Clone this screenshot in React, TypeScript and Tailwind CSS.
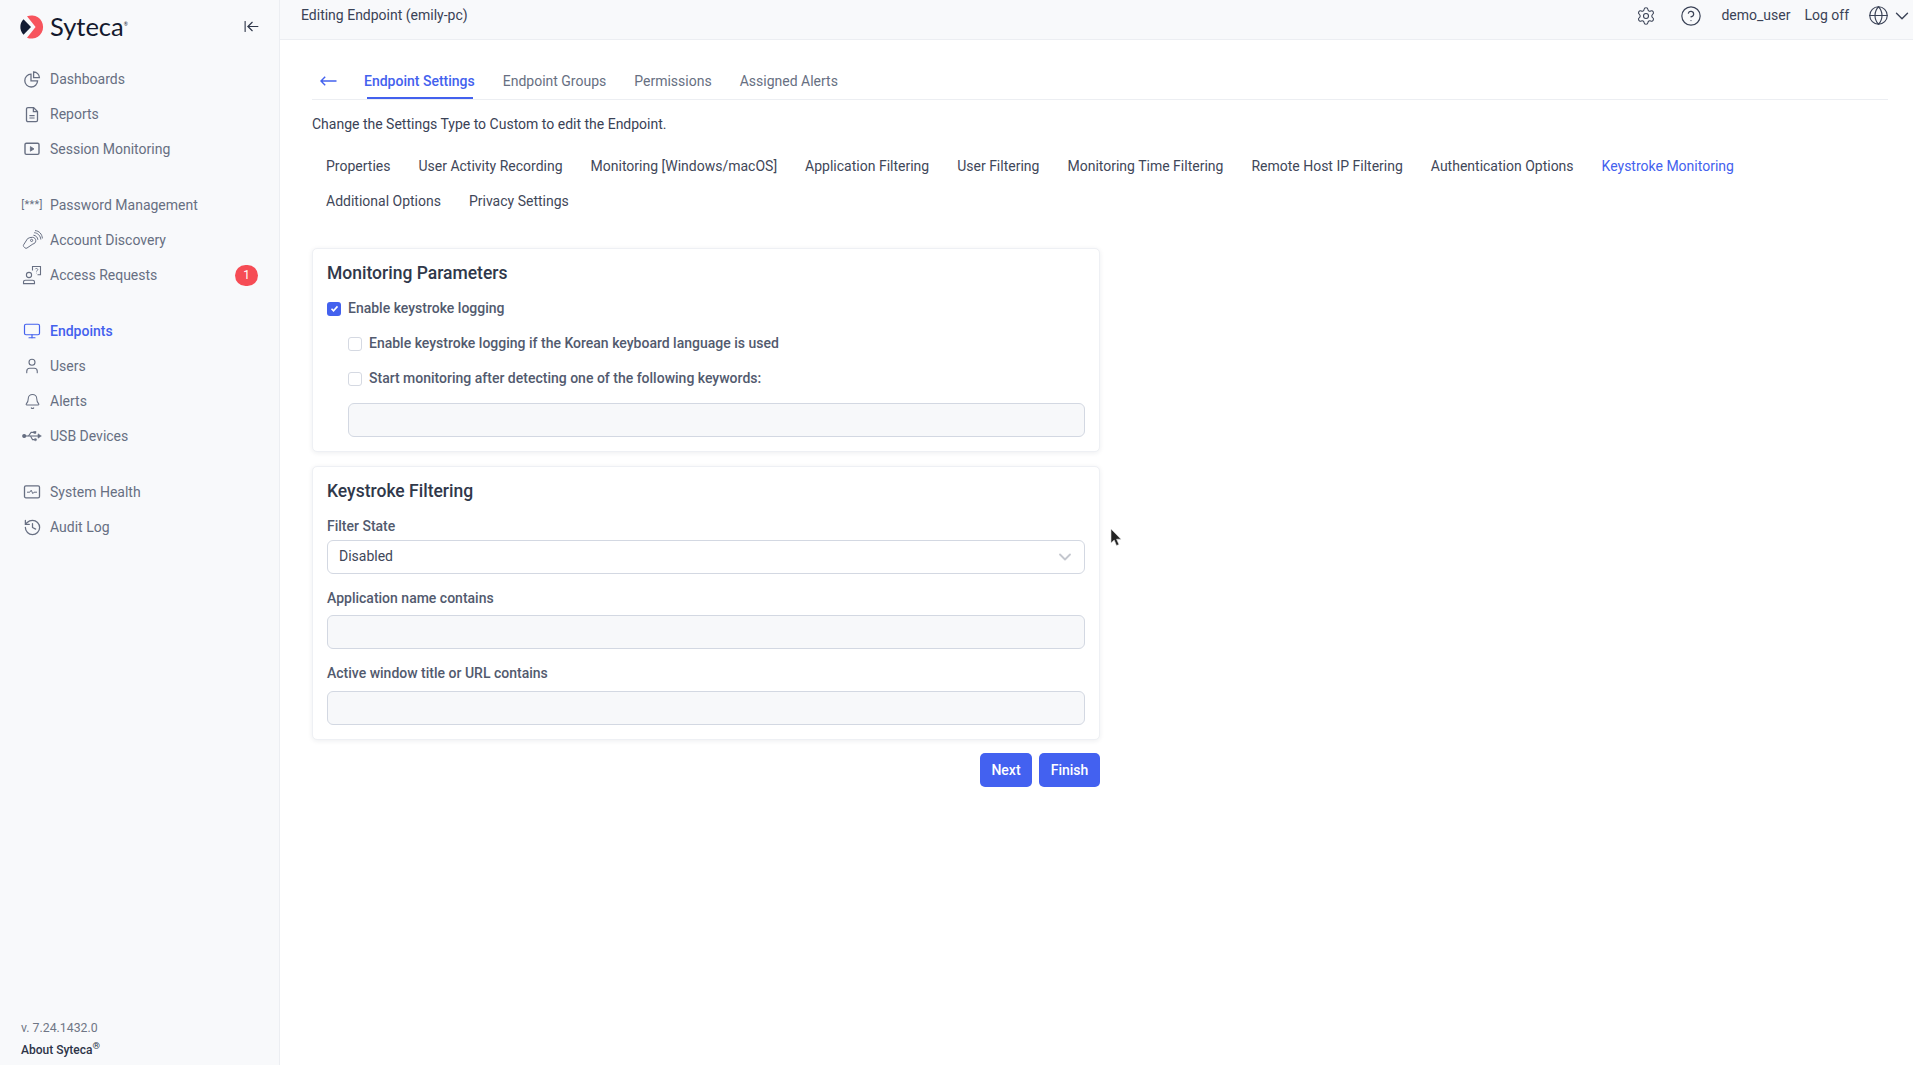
import { ReactNode } from "react";
import { ArrowLeftToLine, Bell, ChevronDown, CircleHelp, Globe, History, Monitor, Settings, User } from "lucide-react";

const PieIcon = () => (
  <svg width="17" height="17" viewBox="0 0 17 17" fill="none" stroke="currentColor" strokeWidth="1.3">
    <path d="M7 3.2a6.4 6.4 0 1 0 6.6 6.6H7z" />
    <path d="M9.6 1v5.6h5.8A5.7 5.7 0 0 0 9.6 1z" />
  </svg>
);

const FileIcon = () => (
  <svg width="16" height="17" viewBox="0 0 16 17" fill="none" stroke="currentColor" strokeWidth="1.3">
    <path d="M2.5 3a1.4 1.4 0 0 1 1.4-1.4H9.6l3.9 3.9v8.8a1.4 1.4 0 0 1-1.4 1.4H3.9a1.4 1.4 0 0 1-1.4-1.4z" />
    <path d="M9.4 1.8v3.9h4" />
    <path d="M5.4 9.6h5.2M5.4 12h5.2" strokeWidth="1.1" />
  </svg>
);

const SessionIcon = () => (
  <svg width="18" height="18" viewBox="0 0 18 18" fill="none" stroke="currentColor" strokeWidth="1.4">
    <rect x="2" y="3.2" width="14" height="11.2" rx="1.4" />
    <path d="M7.4 6.6v4.6l3.6-2.3z" fill="currentColor" strokeWidth="0.8" />
  </svg>
);

const KeyIcon = () => (
  <svg width="21" height="21" viewBox="0 0 21 21" fill="none" stroke="currentColor" strokeWidth="1">
    <path d="M5.6 8.6L1.6 14.8c-.4.7-.3 1.4.3 2l1 1c.6.6 1.4.7 2 .3l6-4.1c1.6-.2 2.9-1.6 2.9-3.3 0-1.9-1.5-3.4-3.4-3.4-1.7 0-3.4.4-4.8 1.3z" />
    <circle cx="9.6" cy="10.4" r="1.1" />
    <path d="M11.4 5.2c2.4.2 4.3 2.1 4.5 4.6M12.2 2.7c3.5.2 6.3 3 6.6 6.8M13 .6c4.3.2 7 3.6 7.4 7.8" />
  </svg>
);

const RequestIcon = () => (
  <svg width="20" height="20" viewBox="0 0 20 20" fill="none" stroke="currentColor" strokeWidth="1.1">
    <circle cx="7" cy="10" r="2.6" />
    <path d="M1.5 18.6v-1.4c0-1.2 1-1.9 2-1.9h7c1 0 2 .7 2 1.9v1.4z" />
    <path d="M10.5 5.5v-4h8v8.3h-3" />
    <path d="M13.2 4.2c.2-1 2.6-1 2.6.4 0 1-1.3 1-1.3 2M14.5 7.8v.5" strokeWidth="0.9" />
  </svg>
);

const UsbIcon = () => (
  <svg width="20" height="14" viewBox="0 0 20 14" fill="none" stroke="currentColor" strokeWidth="1.1">
    <circle cx="2.2" cy="7" r="1.5" fill="currentColor" />
    <path d="M2 7h14" />
    <path d="M16 4.8L19.4 7 16 9.2z" fill="currentColor" strokeWidth="0.5" />
    <path d="M6.5 7l2.6-3.6h3" />
    <rect x="11.8" y="2.3" width="2.2" height="2.2" fill="currentColor" strokeWidth="0.4" />
    <path d="M8.5 7l2 3.6h2" />
    <circle cx="13.4" cy="10.6" r="1.2" fill="currentColor" strokeWidth="0.4" />
  </svg>
);

const HealthIcon = () => (
  <svg width="18" height="18" viewBox="0 0 18 18" fill="none" stroke="currentColor" strokeWidth="1.3">
    <rect x="1.5" y="2.8" width="15" height="12" rx="1.4" />
    <path d="M4 9.2h2.8l1.4-2 1.6 3.4 1.2-1.4H14" strokeWidth="1" />
  </svg>
);

const Logo = () => (
  <svg width="24" height="24" viewBox="0 0 24 24">
    <path d="M3.5 4.3L11 12l-7.5 7.7A11 11 0 0 1 3.5 4.3z" fill="#131c33" />
    <path d="M7 1.3A11.6 11.6 0 1 1 7 22.7L15.6 12z" fill="#f7545d" />
  </svg>
);

const BackArrow = () => (
  <svg width="17" height="10" viewBox="0 0 17 10" fill="none" stroke="#4361ee" strokeWidth="1.4" className="ml-[8px]">
    <path d="M1 5h15.5M5.2 .8L1 5l4.2 4.2" />
  </svg>
);

const NavItem = ({ icon, label, active, badge }: { icon: ReactNode; label: string; active?: boolean; badge?: string }) => (
  <div className={`flex h-[35px] items-center pr-[21px] text-[14px] ${active ? "font-medium text-[#4361ee]" : "text-[#676f82]"}`}>
    <span className="flex w-[50px] shrink-0 justify-center pl-[15px] pr-[1px]">{icon}</span>
    <span className="flex-1">{label}</span>
    {badge && <span className="flex h-[21px] w-[23px] items-center justify-center rounded-full bg-[#f64c55] text-[12px] text-white">{badge}</span>}
  </div>
);

const Sidebar = () => (
  <aside className="flex h-full w-[280px] shrink-0 flex-col border-r border-[#eceef2] bg-[#f8f9fb]">
    <div className="flex items-center pl-[20px] pr-[19px] pt-[11px]">
      <Logo />
      <span className="ml-[6px] flex-1 pb-[5px] font-['Lato'] text-[25.5px] leading-[26px] text-[#141a2e]">Syteca<span className="align-super text-[5px]">®</span></span>
      <ArrowLeftToLine size={17} strokeWidth={1.6} className="mb-[2px] text-[#30384a]" />
    </div>
    <nav className="mt-[18px] flex flex-col">
      <NavItem icon={<PieIcon />} label="Dashboards" />
      <NavItem icon={<FileIcon />} label="Reports" />
      <NavItem icon={<SessionIcon />} label="Session Monitoring" />
      <div className="h-[21px]" />
      <NavItem icon={<span className="whitespace-nowrap text-[11px] tracking-[0.3px]">[***]</span>} label="Password Management" />
      <NavItem icon={<KeyIcon />} label="Account Discovery" />
      <NavItem icon={<RequestIcon />} label="Access Requests" badge="1" />
      <div className="h-[21px]" />
      <NavItem active icon={<Monitor size={18} strokeWidth={1.6} />} label="Endpoints" />
      <NavItem icon={<User size={18} strokeWidth={1.5} />} label="Users" />
      <NavItem icon={<Bell size={17} strokeWidth={1.5} />} label="Alerts" />
      <NavItem icon={<UsbIcon />} label="USB Devices" />
      <div className="h-[21px]" />
      <NavItem icon={<HealthIcon />} label="System Health" />
      <NavItem icon={<History size={19} strokeWidth={1.6} />} label="Audit Log" />
    </nav>
    <div className="mt-auto pb-[4px] pl-[21px]">
      <div className="text-[12.3px] leading-[22px] text-[#6f7685]">v. 7.24.1432.0</div>
      <div className="text-[12px] font-medium leading-[22px] text-[#2d3448]">About Syteca<sup className="text-[9.5px] leading-[0]">®</sup></div>
    </div>
  </aside>
);

const Header = () => (
  <header className="flex h-[40px] items-center justify-between border-b border-[#eceef2] bg-[#f8f9fb] pb-[8px] pl-[21px] text-[14px] text-[#3a4256]">
    <span>Editing Endpoint (emily-pc)</span>
    <div className="flex items-center">
      <Settings size={20} strokeWidth={1.3} />
      <CircleHelp size={22} strokeWidth={1.3} className="ml-[24px]" />
      <span className="ml-[19px]">demo_user</span>
      <span className="ml-[14px]">Log off</span>
      <Globe size={21} strokeWidth={1.3} className="ml-[19px]" />
      <ChevronDown size={22} strokeWidth={1.5} className="ml-[2px]" />
    </div>
  </header>
);

const topTabs = ["Endpoint Groups", "Permissions", "Assigned Alerts"];
const subTabs = ["Properties", "User Activity Recording", "Monitoring [Windows/macOS]", "Application Filtering", "User Filtering", "Monitoring Time Filtering", "Remote Host IP Filtering", "Authentication Options", "Keystroke Monitoring", "Additional Options", "Privacy Settings"];

const Check = ({ checked }: { checked?: boolean }) =>
  checked ? (
    <span className="flex size-[14px] shrink-0 items-center justify-center rounded-[3px] bg-[#4361ee]">
      <svg width="9" height="9" viewBox="0 0 9 9" fill="none" stroke="white" strokeWidth="1.6"><path d="M1.5 4.8l2 2 4-4.4" /></svg>
    </span>
  ) : (
    <span className="size-[14px] shrink-0 rounded-[3px] border border-[#d5d9e2] bg-white" />
  );

const CheckRow = ({ label, checked, nested }: { label: string; checked?: boolean; nested?: boolean }) => (
  <div className={`flex h-[35px] items-center gap-[7px] text-[14px] font-medium text-[#525a6e] ${nested ? "pl-[21px]" : ""}`}>
    <Check checked={checked} />
    <span>{label}</span>
  </div>
);

const Field = ({ className }: { className?: string }) => (
  <div className={`h-[34px] rounded-[6px] border border-[#d3d8e2] bg-[#f7f8fa] ${className ?? ""}`} />
);

const FieldLabel = ({ children }: { children: ReactNode }) => (
  <div className="text-[14px] font-medium leading-[20px] text-[#525a6e]">{children}</div>
);

const Card = ({ title, children }: { title: string; children: ReactNode }) => (
  <section className="rounded-[5px] border border-[#eef0f4] bg-white px-[14px] pb-[14px] pt-[13px] shadow-[0_1px_5px_rgba(30,40,70,0.08)]">
    <h2 className="text-[17.5px] font-medium leading-[22px] text-[#30384a]">{title}</h2>
    {children}
  </section>
);

const Cursor = () => (
  <svg width="12" height="19" viewBox="0 0 12 19" className="absolute left-[1110px] top-[528px]">
    <path d="M1 1v14l3.2-3 2.3 5.5 2.4-1-2.3-5.3H11z" fill="#222" stroke="#ddd" strokeWidth="0.6" />
  </svg>
);

export default function App() {
  return (
    <div className="relative flex h-screen bg-white font-['Roboto',sans-serif]">
      <Sidebar />
      <main className="flex min-w-0 flex-1 flex-col">
        <Header />
        <div className="pl-[32px] pr-[25px]">
          <div className="mt-[23px] flex h-[37px] items-center border-b border-[#eceef2] text-[14px] text-[#676f82]">
            <BackArrow />
            <div className="relative ml-[27px] flex h-[36px] items-center font-medium text-[#4361ee]">
              Endpoint Settings
              <span className="absolute bottom-0 left-[3px] right-[2px] h-[2px] bg-[#4361ee]" />
            </div>
            {topTabs.map((t) => (
              <div key={t} className="ml-[28px] flex h-[36px] items-center">{t}</div>
            ))}
          </div>
          <p className="mt-[14px] text-[14px] leading-[20px] text-[#3a4256]">Change the Settings Type to Custom to edit the Endpoint.</p>
          <div className="mt-[15px] flex flex-wrap text-[14px] text-[#3f4759]">
            {subTabs.map((t) => (
              <div key={t} className={`flex h-[35px] items-center px-[14px] ${t === "Keystroke Monitoring" ? "text-[#4361ee]" : ""}`}>{t}</div>
            ))}
          </div>
          <div className="mt-[29px] flex w-[788px] flex-col gap-[14px]">
            <Card title="Monitoring Parameters">
              <div className="mt-[7px]">
                <CheckRow checked label="Enable keystroke logging" />
                <CheckRow nested label="Enable keystroke logging if the Korean keyboard language is used" />
                <CheckRow nested label="Start monitoring after detecting one of the following keywords:" />
              </div>
              <Field className="ml-[21px] mt-[7px]" />
            </Card>
            <Card title="Keystroke Filtering">
              <div className="mt-[14px]"><FieldLabel>Filter State</FieldLabel></div>
              <div className="mt-[4px] flex h-[34px] items-center justify-between rounded-[6px] border border-[#d3d8e2] bg-white pb-[2px] pl-[11px] pr-[9px] text-[14px] text-[#3f4759]">
                Disabled
                <ChevronDown size={20} strokeWidth={2.2} className="mt-[2px] text-[#c4c7ce]" />
              </div>
              <div className="mt-[14px]"><FieldLabel>Application name contains</FieldLabel></div>
              <Field className="mt-[7px]" />
              <div className="mt-[14px]"><FieldLabel>Active window title or URL contains</FieldLabel></div>
              <Field className="mt-[8px]" />
            </Card>
          </div>
          <div className="mt-[13px] flex w-[788px] justify-end gap-[7px]">
            <button className="h-[34px] w-[52px] rounded-[5px] bg-[#4361f0] text-[14px] font-medium text-white">Next</button>
            <button className="h-[34px] w-[61px] rounded-[5px] bg-[#4361f0] text-[14px] font-medium text-white">Finish</button>
          </div>
        </div>
      </main>
      <Cursor />
    </div>
  );
}
